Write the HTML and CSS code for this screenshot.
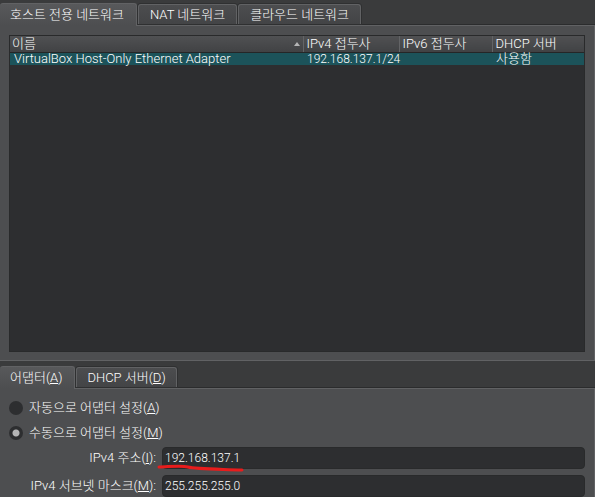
FILE: index.html
```html
<!DOCTYPE html>
<html lang="ko">
<head>
<meta charset="utf-8">
<title>네트워크</title>
<link rel="stylesheet" href="styles.css">
</head>
<body>
<main class="window">
  <nav class="tabs">
    <button class="tab active" type="button">호스트 전용 네트워크</button>
    <button class="tab" type="button">NAT 네트워크</button>
    <button class="tab" type="button">클라우드 네트워크</button>
  </nav>
  <section class="panel list-panel">
    <div class="list">
      <table class="networks">
        <colgroup><col><col class="col-v4"><col class="col-v6"><col class="col-dhcp"></colgroup>
        <thead>
          <tr>
            <th><span class="sorted">이름<svg class="arrow" width="6" height="4" viewBox="0 0 6 4"><path d="M3 0L6 4H0Z" fill="#b5b5b6"/></svg></span></th>
            <th>IPv4 접두사</th>
            <th>IPv6 접두사</th>
            <th>DHCP 서버</th>
          </tr>
        </thead>
        <tbody>
          <tr><td>VirtualBox Host-Only Ethernet Adapter</td><td class="address">192.168.137.1/24</td><td class="address"></td><td>사용함</td></tr>
        </tbody>
      </table>
    </div>
  </section>
  <nav class="tabs lower">
    <button class="tab active" type="button">어댑터(<u>A</u>)</button>
    <button class="tab" type="button">DHCP 서버(<u>D</u>)</button>
  </nav>
  <section class="panel">
    <form class="adapter">
      <label class="choice"><input type="radio" name="mode"><span>자동으로 어댑터 설정(<u>A</u>)</span></label>
      <label class="choice"><input type="radio" name="mode" checked><span>수동으로 어댑터 설정(<u>M</u>)</span></label>
      <div class="fields">
        <label for="address">IPv4 주소(<u>I</u>):</label>
        <div class="entry">
          <input id="address" type="text" value="192.168.137.1">
          <svg class="mark" width="88" height="10" viewBox="0 0 88 10"><path d="M2 4C10 4 24 2 31 4C38 6 58 6 85 7" fill="none" stroke="#e81c1c" stroke-width="3" stroke-linecap="round"/></svg>
        </div>
        <label for="mask">IPv4 서브넷 마스크(<u>M</u>):</label>
        <div class="entry"><input id="mask" type="text" value="255.255.255.0"></div>
      </div>
    </form>
  </section>
</main>
</body>
</html>
```
FILE: styles.css
```css
* { box-sizing: border-box; }

body {
  margin: 0;
  background: #3a3b3c;
  color: #fff;
  font: 300 13px/16px Roboto, "Noto Sans CJK KR", sans-serif;
}

button, input { font: inherit; color: inherit; }

.window {
  display: flex;
  flex-direction: column;
  min-height: 100vh;
}

.tabs {
  display: flex;
  align-items: flex-end;
  gap: 1px;
  height: 25px;
  border-bottom: 1px solid #2b2c2d;
}

.lower { height: 27px; }

.tab {
  height: 20px;
  padding: 0 11px;
  border: 1px solid #616264;
  border-bottom: 0;
  border-radius: 3px 3px 0 0;
  background: linear-gradient(#4c4d4f, #434446);
  box-shadow: 0 0 0 1px #2f3031;
  line-height: 18px;
  white-space: nowrap;
}

.lower .tab { padding: 0 10px; }

.tabs .tab.active {
  position: relative;
  height: 23px;
  margin-bottom: -2px;
  padding: 0 12px 0 10px;
  border-left: 0;
  background: linear-gradient(#58595b, #4d4e50);
  box-shadow: none;
}

.panel {
  border-top: 1px solid #616264;
  border-right: 1px solid #616264;
  background: #4d4e50;
}

.list-panel {
  flex: 1;
  display: flex;
  padding: 9px 9px 8px;
  border-bottom: 1px solid #616264;
}

.list {
  flex: 1;
  border: 1px solid #292a2b;
  background: #2d2e30;
}

.networks {
  width: 100%;
  border-collapse: collapse;
  table-layout: fixed;
}

.col-v4 { width: 96px; }
.col-v6 { width: 93px; }
.col-dhcp { width: 92px; }

.networks th {
  height: 16px;
  padding: 0 3px;
  border-bottom: 1px solid #252627;
  border-left: 1px solid #636466;
  background: linear-gradient(#505153, #414244);
  font-weight: 300;
  line-height: 15px;
  text-align: left;
}

.networks th:first-child { border-left: 0; padding-left: 2px; }

.networks td {
  height: 12px;
  padding: 0 4px;
  background: #1c535a;
  line-height: 12px;
  white-space: nowrap;
}

.networks .address { font-size: 12px; }

.sorted {
  display: flex;
  align-items: center;
  justify-content: space-between;
}

.adapter {
  padding: 6px 9px 0;
}

.choice {
  display: flex;
  align-items: center;
  gap: 6px;
  height: 25px;
}

.choice input {
  appearance: none;
  width: 14px;
  height: 14px;
  margin: 0;
  border-radius: 50%;
  background: #2d2e30;
}

.choice input:checked {
  background: radial-gradient(circle, #b5b5b6 0 3px, #2d2e30 4px);
}

.fields {
  display: grid;
  grid-template-columns: 147px 1fr;
  gap: 6px;
  align-items: center;
  padding-top: 2px;
}

.fields label {
  text-align: right;
  white-space: nowrap;
}

.entry {
  position: relative;
  display: flex;
}

.entry input {
  width: 100%;
  height: 22px;
  padding: 0 2px;
  border: 1px solid #292a2b;
  border-radius: 4px;
  background: #2d2e30;
  font-size: 12px;
}

.mark {
  position: absolute;
  left: -5px;
  top: 16px;
}
```
